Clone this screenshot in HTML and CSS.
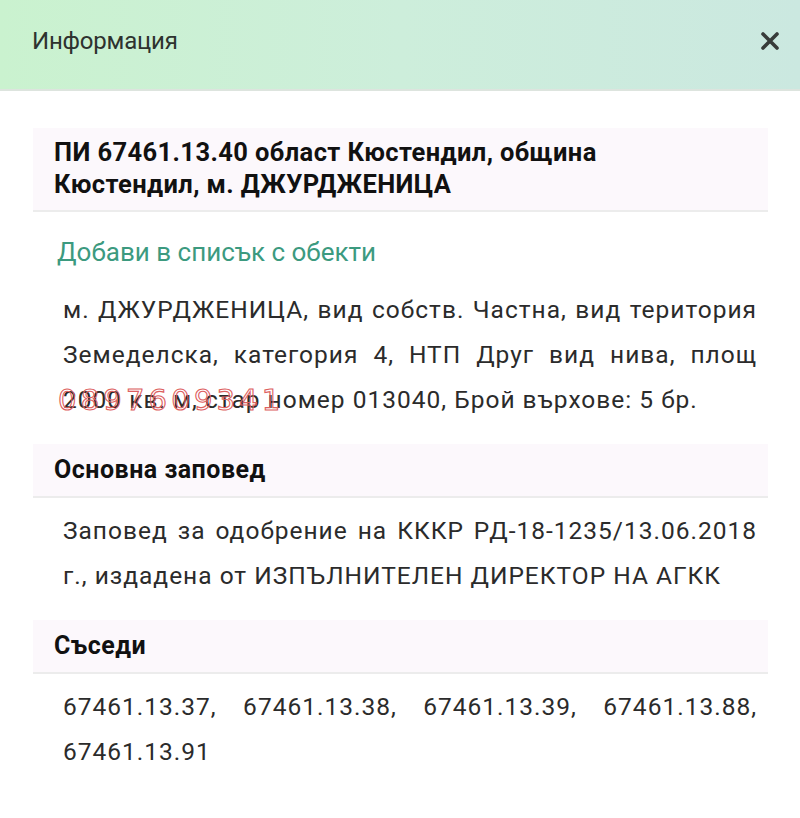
FILE: index.html
```
<!DOCTYPE html>
<html lang="bg">
<head>
    <meta charset="UTF-8">
    <meta name="viewport" content="width=device-width, initial-scale=1.0">
    <title>Информация</title>
    <link rel="stylesheet" href="styles.css">
</head>
<body>
<div class="modal-header">
    <h1>Информация</h1>
    <span class="close-btn">
        <svg width="20" height="20" viewBox="0 0 20 20">
            <path d="M3 3 L17 17 M17 3 L3 17" stroke="#383c3a" stroke-width="3.6" stroke-linecap="round"/>
        </svg>
    </span>
</div>
<div class="modal-body">
    <div class="section-title main-title">ПИ 67461.13.40 област Кюстендил, община Кюстендил, м. ДЖУРДЖЕНИЦА</div>
    <a class="add-link" href="#">Добави в списък с обекти</a>
    <div class="section-text first-text">
        м. ДЖУРДЖЕНИЦА, вид собств. Частна, вид територия Земеделска, категория 4, НТП Друг вид нива, площ 2000 кв. м, стар номер 013040, Брой върхове: 5 бр.
        <span class="stamp">0897609341</span>
    </div>
    <div class="section-title">Основна заповед</div>
    <div class="section-text">
        Заповед за одобрение на КККР РД-18-1235/13.06.2018 г., издадена от ИЗПЪЛНИТЕЛЕН ДИРЕКТОР НА АГКК
    </div>
    <div class="section-title">Съседи</div>
    <div class="section-text">
        67461.13.37, 67461.13.38, 67461.13.39, 67461.13.88, 67461.13.91
    </div>
</div>
</body>
</html>
```

FILE: styles.css
```
body {
    margin: 0;
    font-family: Roboto, "Noto Sans", sans-serif;
    color: #2b2b2b;
    background: #fff;
}
.modal-header {
    height: 89px;
    display: flex;
    align-items: center;
    justify-content: space-between;
    padding: 0 20px 0 32px;
    background: linear-gradient(90deg, #caf2cf 0%, #cdeedb 50%, #cbe8e0 100%);
    border-bottom: 2px solid #dde4de;
}
.modal-header h1 {
    margin: 0 0 8px 0;
    font-size: 24px;
    font-weight: 400;
    color: #2e322f;
    letter-spacing: -0.2px;
}
.close-btn {
    display: flex;
    margin: 0 0 8px 0;
}
.modal-body {
    padding: 37px 32px 40px 33px;
}
.section-title {
    background: #fcf8fc;
    border-bottom: 2px solid #ececec;
    padding: 11px 21px;
    font-size: 25px;
    font-weight: 700;
    line-height: 30px;
    letter-spacing: 0.5px;
    color: #111;
}
.main-title {
    padding: 8px 21px 10px 21px;
    font-size: 25.5px;
    line-height: 32px;
    letter-spacing: 0.4px;
}
.add-link {
    display: block;
    margin: 25px 0 0 24px;
    font-size: 26px;
    line-height: 30px;
    color: #3c9a7f;
    text-decoration: none;
}
.section-text {
    padding: 10px 11px 22px 30px;
    font-size: 24.5px;
    line-height: 45px;
    letter-spacing: 1px;
    text-align: justify;
    color: #2b2b2b;
}
.first-text {
    position: relative;
    padding-top: 20px;
}
.stamp {
    position: absolute;
    left: 25px;
    top: 118px;
    font-family: "DejaVu Sans", sans-serif;
    font-size: 29px;
    line-height: 30px;
    letter-spacing: 4.2px;
    color: transparent;
    -webkit-text-stroke: 1.1px #dd6060;
}
```
